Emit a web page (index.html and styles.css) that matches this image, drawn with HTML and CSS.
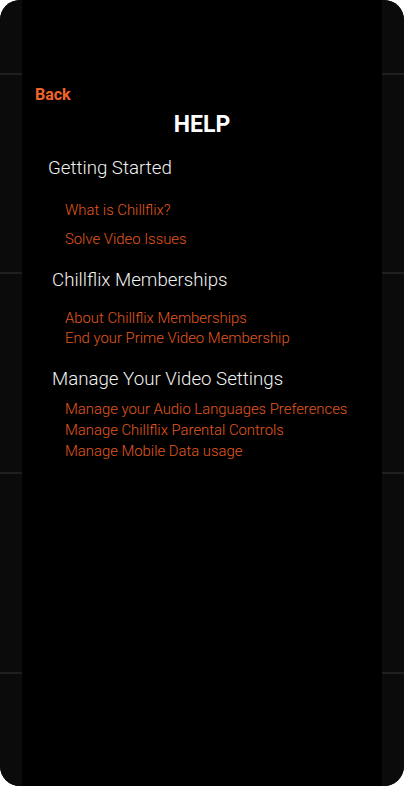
FILE: index.html
```html
<!DOCTYPE html>
<html lang="en">
<head>
<meta charset="utf-8">
<title>Help</title>
<link rel="stylesheet" href="styles.css">
</head>
<body>
<div class="phone">
  <div class="side"></div>
  <main class="screen">
    <a class="back" href="#">Back</a>
    <h1 class="title">HELP</h1>
    <h2 class="section section-first">Getting Started</h2>
    <ul class="links links-spaced">
      <li class="link-a">What is Chillflix?</li>
      <li class="link-b">Solve Video Issues</li>
    </ul>
    <h2 class="section section-second">Chillflix Memberships</h2>
    <ul class="links links-tight">
      <li>About Chillflix Memberships</li>
      <li>End your Prime Video Membership</li>
    </ul>
    <h2 class="section section-third">Manage Your Video Settings</h2>
    <ul class="links links-settings">
      <li>Manage your Audio Languages Preferences</li>
      <li>Manage Chillflix Parental Controls</li>
      <li>Manage Mobile Data usage</li>
    </ul>
  </main>
  <div class="side"></div>
</div>
</body>
</html>
```
FILE: styles.css
```css
* { box-sizing: border-box; }
html, body {
  margin: 0;
  padding: 0;
  background: #ffffff;
}
body {
  font-family: Roboto, "Liberation Sans", Arial, sans-serif;
}
.phone {
  width: 404px;
  height: 786px;
  border-radius: 20px;
  overflow: hidden;
  background: #0b0b0b;
  display: grid;
  grid-template-columns: 22px 360px 22px;
}
.side {
  background-color: #0b0b0b;
  background-image:
    linear-gradient(#1f1f1f, #1f1f1f),
    linear-gradient(#1f1f1f, #1f1f1f),
    linear-gradient(#1f1f1f, #1f1f1f),
    linear-gradient(#1f1f1f, #1f1f1f);
  background-size: 100% 2px;
  background-position: 0 73px, 0 272px, 0 472px, 0 672px;
  background-repeat: no-repeat;
}
.screen {
  background: #000000;
  display: flex;
  flex-direction: column;
  padding-top: 85px;
}
.back {
  display: block;
  margin-left: 13px;
  font-size: 16px;
  line-height: 20px;
  font-weight: 700;
  color: #f0642a;
  text-decoration: none;
}
.title {
  margin: 6px 0 0;
  text-align: center;
  font-size: 23px;
  line-height: 28px;
  font-weight: 700;
  color: #ffffff;
}
.section {
  margin: 0;
  font-size: 18.7px;
  line-height: 24px;
  font-weight: 300;
  color: #f2f2f2;
}
.section-first { margin-top: 17px; padding-left: 26px; }
.section-second { margin-top: 19px; padding-left: 30px; }
.section-third { margin-top: 19px; padding-left: 30px; }
.links {
  list-style: none;
  margin: 0;
  padding: 0 0 0 43px;
  font-size: 14.85px;
  font-weight: 300;
  color: #e2581d;
}
.links li { line-height: 20px; }
.links-spaced { margin-top: 20px; display: flex; flex-direction: column; gap: 9px; }
.links-tight { margin-top: 16px; }
.links-settings { margin-top: 8px; }
.links-settings li { line-height: 21px; }
```
